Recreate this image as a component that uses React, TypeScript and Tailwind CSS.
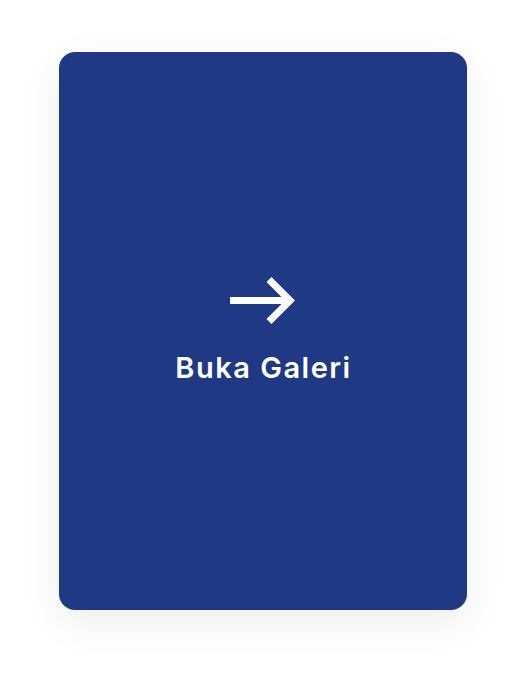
export default function App() {
  return (
    <div className="min-h-[678px] w-[528px] bg-white pt-[52px] pl-[59px]">
      <button
        className="flex h-[558px] w-[408px] flex-col items-center justify-center gap-[26px] rounded-2xl bg-[#1f3984] shadow-[0_12px_40px_rgba(0,0,0,0.07)]"
        style={{ fontFamily: "Inter, 'Noto Sans', sans-serif" }}
      >
        {/* arrow */}
        <svg width="66" height="48" viewBox="0 0 66 48" fill="none">
          <path d="M0 23.5 H60" stroke="white" strokeWidth="7" />
          <path d="M39 2.5 L60 23.5 L39 44.5" stroke="white" strokeWidth="7" strokeLinejoin="miter" />
        </svg>
        <span className="pl-[1px] text-[29px] leading-[34px] font-semibold tracking-[1.5px] text-white">
          Buka Galeri
        </span>
      </button>
    </div>
  );
}
